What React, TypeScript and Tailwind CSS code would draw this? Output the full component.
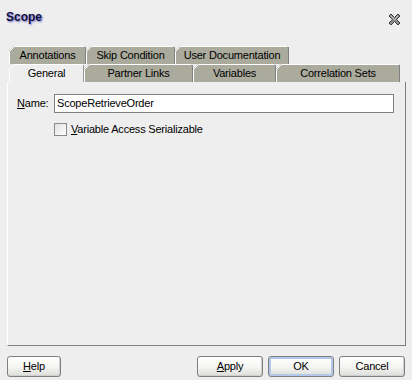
import React from 'react'

const font = "font-['Liberation_Sans',Arial,sans-serif]"

type TabDef = { label: string; w: number; selected?: boolean }

const topRow: TabDef[] = [
  { label: 'Annotations', w: 77 },
  { label: 'Skip Condition', w: 89 },
  { label: 'User Documentation', w: 114 },
]

const bottomRow: TabDef[] = [
  { label: 'General', w: 75, selected: true },
  { label: 'Partner Links', w: 109 },
  { label: 'Variables', w: 83 },
  { label: 'Correlation Sets', w: 124 },
]

function Tab({ label, w, selected }: TabDef) {
  const h = 18
  return (
    <div className="relative h-[18px] flex items-center justify-center shrink-0" style={{ width: w }}>
      <svg className="absolute inset-0" width={w} height={h}>
        <path d={`M0 ${h} V5 L5 0 H${w - 1} V${h} Z`} fill={selected ? '#eeeeee' : '#abab9d'} />
        <path d={`M0.5 ${h} V5.5 L5.5 0.5 H${w - 1.5}`} fill="none" stroke="#ffffff" />
        <path d={`M${w - 0.5} 1 V${h}`} fill="none" stroke={selected ? '#9a9a9a' : '#808080'} />
      </svg>
      <span className="relative text-[11px] tracking-[-0.2px] text-black leading-none pt-[1px]">{label}</span>
    </div>
  )
}

function Btn({ children, w, focus }: { children: React.ReactNode; w: string; focus?: boolean }) {
  return (
    <button
      className={`${w} h-[21px] rounded-[3px] border border-[#7f7f7f] bg-gradient-to-b from-white via-[#f6f6f4] to-[#dcdcd8] text-[11px] tracking-[-0.2px] text-black flex items-center justify-center ${
        focus ? 'shadow-[inset_0_0_0_2px_#b4c8ec]' : 'shadow-[inset_-1px_-1px_0_#cfcfcf]'
      }`}
    >
      {children}
    </button>
  )
}

function CloseIcon() {
  return (
    <svg width="15" height="15" viewBox="0 0 15 15">
      <path
        d="M2 4 L4 2 L7.5 5.5 L11 2 L13 4 L9.5 7.5 L13 11 L11 13 L7.5 9.5 L4 13 L2 11 L5.5 7.5 Z"
        fill="#8c8c8c"
        stroke="#3c3c3c"
        strokeWidth="1"
        strokeLinejoin="round"
      />
      <path d="M3.5 3.8 L7.5 7.5 M11.3 3.8 L7.5 7.5" stroke="#c8c8c8" strokeWidth="1" />
    </svg>
  )
}

export default function App() {
  return (
    <div className={`${font} w-[412px] h-[380px] bg-[#eeeeee] flex flex-col overflow-hidden`}>
      <div className="h-[46px] flex items-start justify-between pl-[6px] pr-[10px]">
        <div className="pt-[10px] text-[12px] font-bold leading-[14px] text-[#101040] [text-shadow:1px_1px_2px_#6c6cc8]">
          Scope
        </div>
        <div className="pt-[12px]">
          <CloseIcon />
        </div>
      </div>

      <div className="pl-[9px] flex flex-col">
        <div className="flex">
          {topRow.map((t) => (
            <Tab key={t.label} {...t} />
          ))}
        </div>
        <div className="flex">
          {bottomRow.map((t) => (
            <Tab key={t.label} {...t} />
          ))}
        </div>
      </div>

      <div className="ml-[7px] w-[399px] h-[264px] border-l border-l-white border-r border-r-[#808080] border-b border-b-[#808080] bg-[#eeeeee] pt-[12px] text-[11px] tracking-[-0.2px] text-black">
        <div className="flex items-center">
          <span className="ml-[9px] w-[37px]">
            <span className="underline">N</span>ame:
          </span>
          <div className="w-[340px] h-[19px] border border-[#7f7f7f] bg-white flex items-center pl-[2px]">
            ScopeRetrieveOrder
          </div>
        </div>
        <div className="flex items-center mt-[8px] ml-[46px]">
          <div className="w-[13px] h-[13px] border border-[#8a8a8a] bg-gradient-to-br from-[#e2e2e2] to-white" />
          <span className="ml-[4px]">
            <span className="underline">V</span>ariable Access Serializable
          </span>
        </div>
      </div>

      <div className="mt-[10px] px-[7px] flex">
        <Btn w="w-[54px]">
          <span className="underline">H</span>elp
        </Btn>
        <div className="flex-1" />
        <div className="flex gap-[5px]">
          <Btn w="w-[66px]">
            <span className="underline">A</span>pply
          </Btn>
          <Btn w="w-[66px]" focus>
            OK
          </Btn>
          <Btn w="w-[66px]">Cancel</Btn>
        </div>
      </div>
    </div>
  )
}
